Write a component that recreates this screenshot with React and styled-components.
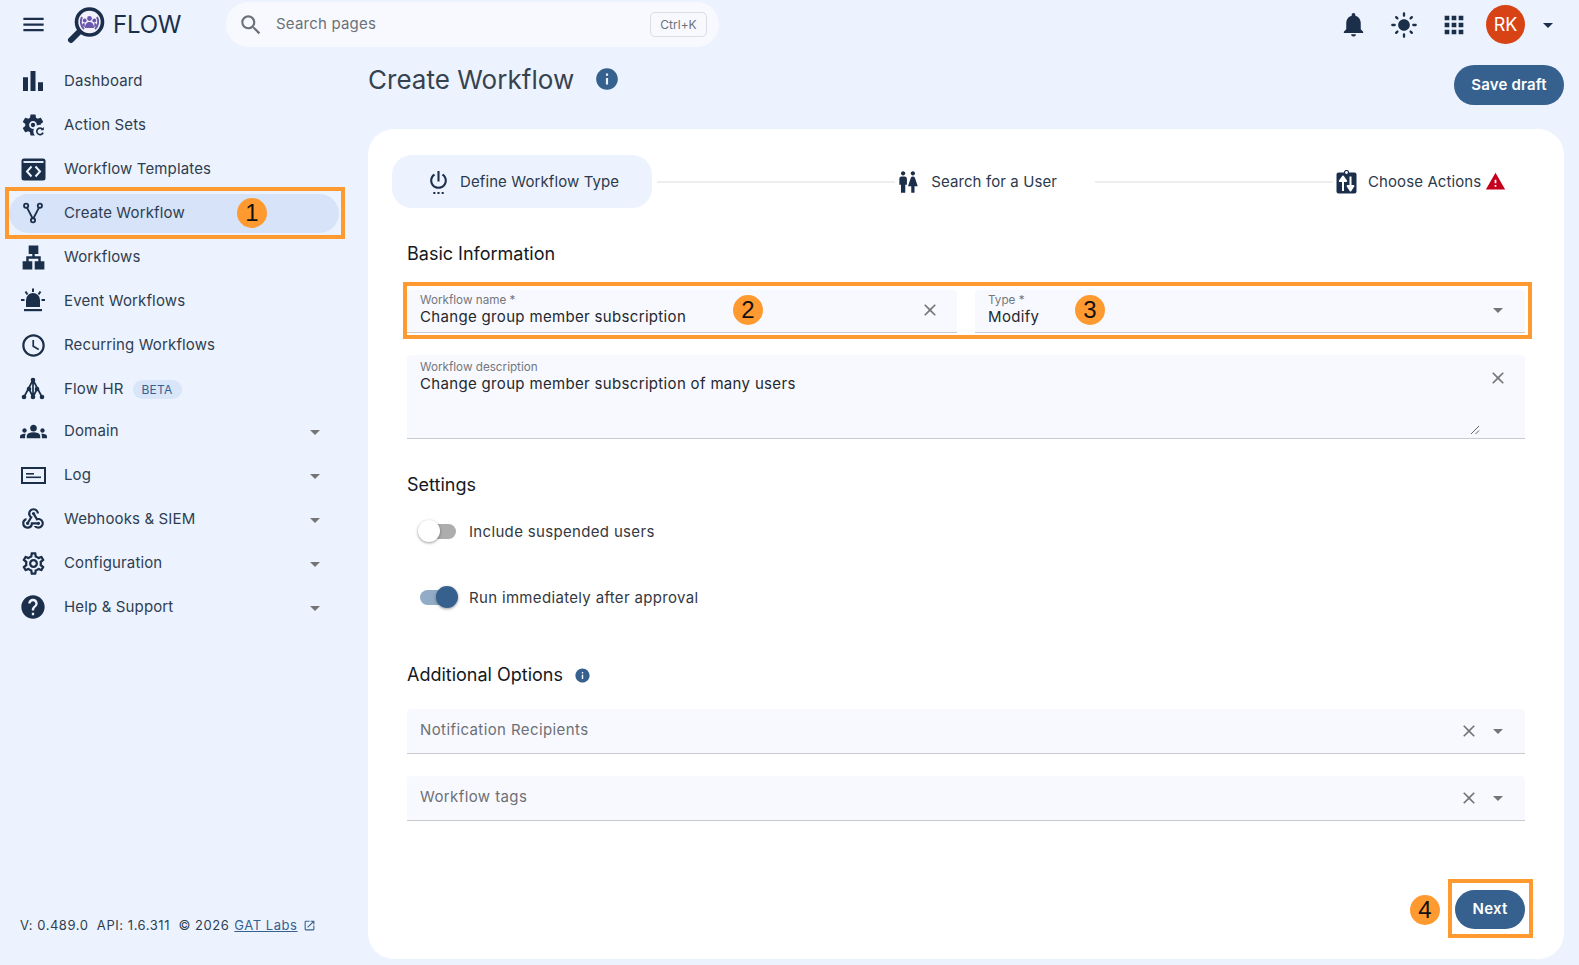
import React from 'react'
import styled, { createGlobalStyle } from 'styled-components'
import {
  MdMenu, MdSearch, MdNotifications, MdLightMode, MdApps, MdBarChart, MdLan, MdAccessTime, MdGroups,
  MdOutlineWebhook, MdOutlineSettings, MdHelp, MdArrowDropDown, MdInfo, MdClose, MdSettingsPower, MdWc,
  MdWarning, MdOpenInNew,
} from 'react-icons/md'

const navy = '#1b2f4b'
const blue = '#36618e'
const orange = '#ff9a30'

const Global = createGlobalStyle`
  html, body { margin: 0; height: 100%; overflow: hidden; }
  body {
    background: #ecf3fe;
    color: #2f3d50;
    font-family: Inter, "Noto Sans", sans-serif;
    font-size: 15px;
    letter-spacing: 0.14px;
  }
  * { box-sizing: border-box; }
`

const Page = styled.div`
  display: flex;
  flex-direction: column;
  height: 965px;
`

const Header = styled.header`
  display: flex;
  align-items: center;
  height: 47px;
  padding: 2px 19px 0 0;
  flex: none;
`

const Brand = styled.div`
  width: 226px;
  flex: none;
  display: flex;
  align-items: center;
  padding-left: 20px;
  color: ${navy};
`

const LogoSlot = styled.span`
  display: flex;
  margin-left: 19px;
`

const LogoText = styled.span`
  font-size: 24px;
  line-height: 30px;
  margin-left: 7px;
  letter-spacing: -0.2px;
`

const Search = styled.div`
  width: 493px;
  height: 45px;
  border-radius: 23px;
  background: #f8f9fe;
  display: flex;
  align-items: center;
  padding: 0 12px;
  color: #6c7178;
  gap: 12px;
`

const SearchText = styled.span`
  flex: 1;
  letter-spacing: 0.2px;
  padding-bottom: 2px;
`

const Kbd = styled.span`
  width: 57px;
  height: 25px;
  border: 1px solid #dcdde0;
  border-radius: 5px;
  font-size: 12px;
  letter-spacing: 0;
  display: flex;
  align-items: center;
  justify-content: center;
`

const TopIcons = styled.div`
  margin-left: auto;
  display: flex;
  align-items: center;
  gap: 22px;
  color: ${navy};
`

const Avatar = styled.div`
  width: 39px;
  height: 39px;
  border-radius: 50%;
  background: #d84315;
  color: #fff;
  font-size: 18px;
  letter-spacing: 0;
  display: flex;
  align-items: center;
  justify-content: center;
  margin-left: -4px;
`

const UserCaret = styled.span`
  display: flex;
  margin-left: -11px;
`

const Body = styled.div`
  flex: 1;
  display: flex;
  min-height: 0;
`

const Sidebar = styled.aside`
  width: 368px;
  flex: none;
  display: flex;
  flex-direction: column;
  padding: 12px 0 30px;
`

const NavGroup = styled.nav`
  margin-top: ${p => p.$shift || 0}px;
`

const NavRow = styled.div`
  position: relative;
  height: 44px;
  display: flex;
  align-items: center;
  padding: 0 0 0 9px;
`

const NavPill = styled.div`
  width: 330px;
  height: 39px;
  border-radius: 20px;
  background: ${p => (p.$active ? '#d6e3f8' : 'transparent')};
  display: flex;
  align-items: center;
  padding: 0 12px;
  gap: 19px;
`

const NavIcon = styled.span`
  width: 24px;
  height: 24px;
  flex: none;
  display: flex;
  align-items: center;
  justify-content: center;
  color: ${navy};
  svg { flex: none; }
`

const NavLabel = styled.span`
  padding-bottom: 2px;
`

const NavCaret = styled.span`
  margin-left: auto;
  display: flex;
  color: #757575;
  margin-top: 1px;
`

const Beta = styled.span`
  width: 49px;
  height: 19px;
  border-radius: 10px;
  margin-left: -10px;
  background: #d9e5f8;
  color: ${blue};
  font-size: 12px;
  letter-spacing: 0.2px;
  display: flex;
  align-items: center;
  justify-content: center;
`

const Frame = styled.div`
  position: absolute;
  left: ${p => p.$l}px;
  top: ${p => p.$t}px;
  right: ${p => p.$r}px;
  bottom: ${p => p.$b}px;
  border: 4px solid ${orange};
  pointer-events: none;
`

const Badge = styled.span`
  width: 30px;
  height: 30px;
  flex: none;
  border-radius: 50%;
  background: ${orange};
  color: #111;
  font-family: "Liberation Sans", Arial, sans-serif;
  font-size: 24px;
  letter-spacing: 0;
  display: flex;
  align-items: center;
  justify-content: center;
`

const FloatBadge = styled(Badge)`
  position: absolute;
  left: ${p => p.$l}px;
  top: ${p => p.$t}px;
`

const Footer = styled.footer`
  margin-top: auto;
  padding-left: 20px;
  height: 20px;
  font-size: 13px;
  line-height: 20px;
  letter-spacing: 0.55px;
  white-space: pre;
  display: flex;
  align-items: center;
`

const Link = styled.a`
  color: ${blue};
  text-decoration: underline;
  margin-left: 5px;
`

const ExtIcon = styled.span`
  display: flex;
  margin-left: 5px;
  color: ${blue};
`

const Main = styled.main`
  flex: 1;
  min-width: 0;
  padding-right: 15px;
  display: flex;
  flex-direction: column;
`

const TitleBar = styled.div`
  height: 82px;
  flex: none;
  display: flex;
  align-items: flex-start;
`

const Title = styled.h1`
  margin: 17px 0 0;
  font-size: 26px;
  line-height: 32px;
  font-weight: 400;
  letter-spacing: 0.03px;
  color: #37424f;
`

const TitleInfo = styled.span`
  display: flex;
  margin: 19px 0 0 20px;
  color: ${blue};
`

const Pill = styled.button`
  border: 0;
  background: ${blue};
  color: #fff;
  font: 600 15px Inter, sans-serif;
  letter-spacing: 0.2px;
  border-radius: 20px;
  padding: 0 0 2px;
`

const SaveDraft = styled(Pill)`
  width: 110px;
  height: 40px;
  margin: 18px 0 0 auto;
`

const Card = styled.section`
  height: 830px;
  flex: none;
  background: #fff;
  border-radius: 26px;
  padding: 26px 39px 0 24px;
`

const Stepper = styled.div`
  display: flex;
  align-items: center;
`

const Step = styled.div`
  display: flex;
  align-items: center;
  gap: ${p => p.$gap || 9}px;
  height: 53px;
  border-radius: 20px;
  background: ${p => (p.$active ? '#ecf3fe' : 'transparent')};
  padding: ${p => p.$pad};
  color: #2c3a4d;
  letter-spacing: 0.1px;
  svg { color: ${navy}; flex: none; }
`

const StepWarn = styled.span`
  display: flex;
  margin-left: -7px;
  svg { color: #c4001d; }
`

const StepLine = styled.div`
  width: 238px;
  height: 2px;
  background: #eceef0;
  flex: none;
  margin-left: ${p => p.$ml || 0}px;
`

const Form = styled.div`
  margin-left: 15px;
`

const Heading = styled.h2`
  margin: ${p => p.$mt}px 0 0;
  font-size: 18px;
  line-height: 24px;
  font-weight: 400;
  letter-spacing: 0;
  color: #14181d;
  display: flex;
  align-items: center;
  gap: 11px;
  svg { color: ${blue}; }
`

const FieldRow = styled.div`
  position: relative;
  display: flex;
  gap: 18px;
  margin-top: 24px;
`

const Field = styled.div`
  position: relative;
  flex: ${p => (p.$fill ? '1' : 'none')};
  width: ${p => (p.$fill ? 'auto' : '550px')};
  height: ${p => p.$h || 43}px;
  margin-top: ${p => p.$mt || 0}px;
  background: #f8f9fe;
  border-bottom: 1px solid #c9cad0;
  border-radius: 4px 4px 0 0;
  padding: ${p => p.$pt || 2}px 13px 0;
  display: ${p => (p.$row ? 'flex' : 'block')};
  align-items: center;
`

const FieldLabel = styled.div`
  font-size: 11.7px;
  line-height: 15px;
  letter-spacing: 0;
  color: #74777c;
  margin: 1px 0 -1px;
`

const FieldValue = styled.div`
  line-height: 20px;
  color: #23282e;
  letter-spacing: 0.33px;
`

const Placeholder = styled.div`
  letter-spacing: 0.4px;
  color: #6c7076;
  margin-top: -5px;
`

const FieldIcons = styled.div`
  position: absolute;
  right: ${p => p.$r}px;
  top: ${p => p.$t}px;
  display: flex;
  align-items: center;
  color: #757575;
  gap: ${p => p.$gap || 0}px;
`

const Resizer = styled.svg`
  position: absolute;
  right: 45px;
  bottom: 3px;
`

const SwitchRow = styled.label`
  height: 40px;
  margin-top: ${p => p.$mt}px;
  display: flex;
  align-items: center;
  gap: 13px;
  padding-left: 13px;
  letter-spacing: 0.33px;
  color: #34393f;
`

const Track = styled.span`
  position: relative;
  width: 36px;
  height: 15px;
  border-radius: 8px;
  background: ${p => (p.$on ? '#92abc7' : '#adadad')};
`

const Thumb = styled.span`
  position: absolute;
  top: -4px;
  left: ${p => (p.$on ? '16px' : '-2px')};
  width: 22px;
  height: 22px;
  border-radius: 50%;
  background: ${p => (p.$on ? blue : '#fff')};
  box-shadow: 0 1px 3px rgba(0, 0, 0, 0.4);
`

const Actions = styled.div`
  position: relative;
  margin-top: 69px;
  display: flex;
  justify-content: flex-end;
  align-items: center;
  gap: 15px;
`

const NextButton = styled(Pill)`
  width: 70px;
  height: 39px;
`

const LogoMark = () => (
  <svg width="40" height="38" viewBox="0 0 40 38">
    <path d="M13 26 L5 34" stroke={navy} strokeWidth="6" strokeLinecap="round" />
    <circle cx="23.5" cy="16" r="13" fill="#f3f2fb" stroke={navy} strokeWidth="3.6" />
    <path d="M16 11a10 10 0 0 0 2 12M31 11a10 10 0 0 1-2 12" fill="none" stroke="#6a58ad" strokeWidth="2" />
    <circle cx="23.5" cy="12.5" r="2.4" fill="#6a58ad" />
    <circle cx="18.7" cy="14.5" r="1.9" fill="#6a58ad" />
    <circle cx="28.3" cy="14.5" r="1.9" fill="#6a58ad" />
    <path d="M19 22c0-4 2-6 4.500-6s4.500 2 4.500 6zM16 20c0-2 1-3 2.500-3l.5 4zM31 20c0-2-1-3-2.500-3l-.5 4z" fill="#6a58ad" />
  </svg>
)

const gearPath = 'M19.14 12.94c.04-.3.06-.61.06-.94 0-.32-.02-.64-.07-.94l2.03-1.58c.18-.14.23-.41.12-.61l-1.92-3.32c-.12-.22-.37-.29-.59-.22l-2.39.96c-.5-.38-1.03-.7-1.62-.94l-.36-2.54c-.04-.24-.24-.41-.48-.41h-3.84c-.24 0-.43.17-.47.41l-.36 2.54c-.59.24-1.13.57-1.62.94l-2.39-.96c-.22-.08-.47 0-.59.22L2.74 8.87c-.12.21-.08.47.12.61l2.03 1.58c-.05.3-.09.63-.09.94s.02.64.07.94l-2.03 1.58c-.18.14-.23.41-.12.61l1.92 3.32c.12.22.37.29.59.22l2.39-.96c.5.38 1.03.7 1.62.94l.36 2.54c.05.24.24.41.48.41h3.84c.24 0 .44-.17.47-.41l.36-2.54c.59-.24 1.13-.56 1.62-.94l2.39.96c.22.08.47 0 .59-.22l1.92-3.32c.12-.22.07-.47-.12-.61l-2.01-1.58zM12 15.6c-1.98 0-3.6-1.62-3.6-3.6s1.62-3.6 3.6-3.6 3.6 1.62 3.6 3.6-1.62 3.6-3.6 3.6z'

const ActionSetsIcon = () => (
  <svg width="26" height="26" viewBox="0 0 24 24">
    <path d={gearPath} fill="currentColor" />
    <circle cx="12" cy="12" r="2" fill="currentColor" />
    <circle cx="18.500" cy="18" r="6.200" fill="#ecf3fe" />
    <path d="M21.300 19a3 3 0 1 1-.4-3" fill="none" stroke="currentColor" strokeWidth="1.500" />
    <path d="M22 13.800v3h-3z" fill="currentColor" />
  </svg>
)

const TemplatesIcon = () => (
  <svg width="25" height="23" viewBox="0 0 25 23">
    <rect x="0.500" y="0.500" width="24" height="22" rx="2.500" fill="currentColor" />
    <rect x="2.500" y="3" width="20" height="2" fill="#dfe8f6" />
    <path d="M10.500 8.500l-4.500 5 4.500 5M14.500 8.500l4.500 5-4.500 5" fill="none" stroke="#ecf3fe" strokeWidth="2" />
  </svg>
)

const ForkIcon = () => (
  <svg width="22" height="22" viewBox="0 0 24 24" fill="none" stroke="currentColor" strokeWidth="2">
    <circle cx="4.500" cy="4" r="2.300" />
    <circle cx="19.500" cy="4" r="2.300" />
    <circle cx="12" cy="20" r="2.300" />
    <path d="M5.500 6.200L11.500 17.700M18.500 6.200L12.500 17.700" />
  </svg>
)

const SirenIcon = () => (
  <svg width="24" height="26" viewBox="0 0 24 26">
    <path d="M5 19v-7a7 7 0 0 1 14 0v7z" fill="currentColor" />
    <rect x="3" y="21" width="18" height="2.200" fill="currentColor" />
    <rect x="11" y="0.500" width="2" height="3.500" fill="currentColor" />
    <rect x="0" y="11" width="3.500" height="2" fill="currentColor" />
    <rect x="20.500" y="11" width="3.500" height="2" fill="currentColor" />
    <path d="M4.500 3.500l2 3M19.500 3.500l-2 3" stroke="currentColor" strokeWidth="2" />
  </svg>
)

const TreeIcon = () => (
  <svg width="24" height="24" viewBox="0 0 24 24">
    <path d="M12 3L3 20M12 3l9 17M12 3v17M8 12l4 8M16 12l-4 8" fill="none" stroke="currentColor" strokeWidth="1.700" />
    {[[12, 3], [8, 12], [16, 12], [3, 20], [12, 20], [21, 20]].map(([cx, cy]) => (
      <circle key={`${cx}-${cy}`} cx={cx} cy={cy} r="2.300" fill="currentColor" />
    ))}
  </svg>
)

const LogIcon = () => (
  <svg width="25" height="17" viewBox="0 0 25 17">
    <rect x="1" y="1" width="23" height="15" fill="none" stroke="currentColor" strokeWidth="2" />
    <rect x="5" y="6" width="8" height="1.600" fill="currentColor" />
    <rect x="5" y="9.500" width="15" height="1.600" fill="currentColor" />
  </svg>
)

const ClipboardIcon = () => (
  <svg width="21" height="24" viewBox="0 0 21 24">
    <rect x="0.500" y="2.500" width="20" height="21" rx="2" fill={navy} />
    <circle cx="10.500" cy="2.500" r="2" fill="#fff" stroke={navy} strokeWidth="1.200" />
    <path d="M7 21V8M3.800 11L7 6.500 10.200 11z" stroke="#fff" strokeWidth="2" fill="#fff" strokeLinejoin="round" />
    <path d="M14.500 6.500V18M11.600 16l2.900 4.500 2.900-4.500z" stroke="#fff" strokeWidth="2" fill="#fff" strokeLinejoin="round" />
  </svg>
)

const navTop = [
  { label: 'Dashboard', icon: <MdBarChart size={30} /> },
  { label: 'Action Sets', icon: <ActionSetsIcon /> },
  { label: 'Workflow Templates', icon: <TemplatesIcon /> },
  { label: 'Create Workflow', icon: <ForkIcon />, active: true },
  { label: 'Workflows', icon: <MdLan size={29} /> },
  { label: 'Event Workflows', icon: <SirenIcon /> },
  { label: 'Recurring Workflows', icon: <MdAccessTime size={27} /> },
  { label: 'Flow HR', icon: <TreeIcon />, beta: true },
]

const navBottom = [
  { label: 'Domain', icon: <MdGroups size={27} /> },
  { label: 'Log', icon: <LogIcon /> },
  { label: 'Webhooks & SIEM', icon: <MdOutlineWebhook size={26} /> },
  { label: 'Configuration', icon: <MdOutlineSettings size={27} /> },
  { label: 'Help & Support', icon: <MdHelp size={28} /> },
]

const NavItem = ({ item, caret }) => (
  <NavRow>
    <NavPill $active={item.active}>
      <NavIcon>{item.icon}</NavIcon>
      <NavLabel>{item.label}</NavLabel>
      {item.beta && <Beta>BETA</Beta>}
      {caret && <NavCaret><MdArrowDropDown size={24} /></NavCaret>}
    </NavPill>
    {item.active && (
      <>
        <Frame $l={5} $t={-4} $r={23} $b={-4} />
        <FloatBadge $l={237} $t={7}>1</FloatBadge>
      </>
    )}
  </NavRow>
)

export default function App() {
  return (
    <Page>
      <Global />
      <Header>
        <Brand>
          <MdMenu size={27} />
          <LogoSlot><LogoMark /></LogoSlot>
          <LogoText>FLOW</LogoText>
        </Brand>
        <Search>
          <MdSearch size={26} />
          <SearchText>Search pages</SearchText>
          <Kbd>Ctrl+K</Kbd>
        </Search>
        <TopIcons>
          <MdNotifications size={29} />
          <MdLightMode size={28} />
          <MdApps size={28} />
          <Avatar>RK</Avatar>
          <UserCaret><MdArrowDropDown size={24} /></UserCaret>
        </TopIcons>
      </Header>
      <Body>
        <Sidebar>
          <NavGroup>
            {navTop.map(item => <NavItem key={item.label} item={item} />)}
          </NavGroup>
          <NavGroup $shift={-2}>
            {navBottom.map(item => <NavItem key={item.label} item={item} caret />)}
          </NavGroup>
          <Footer>
            V: 0.489.0  API: 1.6.311  © 2026<Link>GAT Labs</Link>
            <ExtIcon><MdOpenInNew size={13} /></ExtIcon>
          </Footer>
        </Sidebar>
        <Main>
          <TitleBar>
            <Title>Create Workflow</Title>
            <TitleInfo><MdInfo size={26} /></TitleInfo>
            <SaveDraft>Save draft</SaveDraft>
          </TitleBar>
          <Card>
            <Stepper>
              <Step $active $pad="0 33px 0 34px">
                <MdSettingsPower size={25} />
                <span>Define Workflow Type</span>
              </Step>
              <StepLine $ml={5} />
              <Step $pad="0 38px 0 0" $gap={10}>
                <MdWc size={26} />
                <span>Search for a User</span>
              </Step>
              <StepLine />
              <Step $pad="0 0 0 3px" $gap={11}>
                <ClipboardIcon />
                <span>Choose Actions</span>
                <StepWarn><MdWarning size={21} /></StepWarn>
              </Step>
            </Stepper>
            <Form>
              <Heading $mt={34}>Basic Information</Heading>
              <FieldRow>
                <Field>
                  <FieldLabel>Workflow name *</FieldLabel>
                  <FieldValue>Change group member subscription</FieldValue>
                  <FieldIcons $r={17} $t={10}><MdClose size={20} /></FieldIcons>
                  <FloatBadge $l={326} $t={5}>2</FloatBadge>
                </Field>
                <Field $fill>
                  <FieldLabel>Type *</FieldLabel>
                  <FieldValue>Modify</FieldValue>
                  <FieldIcons $r={15} $t={8}><MdArrowDropDown size={24} /></FieldIcons>
                  <FloatBadge $l={100} $t={5}>3</FloatBadge>
                </Field>
                <Frame $l={-4} $t={-8} $r={-7} $b={-6} />
              </FieldRow>
              <Field $fill $h={84} $mt={22} $pt={4}>
                <FieldLabel>Workflow description</FieldLabel>
                <FieldValue>Change group member subscription of many users</FieldValue>
                <FieldIcons $r={17} $t={13}><MdClose size={20} /></FieldIcons>
                <Resizer width="10" height="10" viewBox="0 0 10 10">
                  <path d="M1 9L9 1M5.500 9L9 5.500" stroke="#666" strokeWidth="1" />
                </Resizer>
              </Field>
              <Heading $mt={34}>Settings</Heading>
              <SwitchRow $mt={14}>
                <Track><Thumb /></Track>
                Include suspended users
              </SwitchRow>
              <SwitchRow $mt={26}>
                <Track $on><Thumb $on /></Track>
                Run immediately after approval
              </SwitchRow>
              <Heading $mt={46}>
                Additional Options
                <MdInfo size={17} />
              </Heading>
              <Field $fill $h={45} $mt={22} $row>
                <Placeholder>Notification Recipients</Placeholder>
                <FieldIcons $r={15} $t={10} $gap={7}>
                  <MdClose size={20} />
                  <MdArrowDropDown size={24} />
                </FieldIcons>
              </Field>
              <Field $fill $h={45} $mt={22} $row>
                <Placeholder>Workflow tags</Placeholder>
                <FieldIcons $r={15} $t={10} $gap={7}>
                  <MdClose size={20} />
                  <MdArrowDropDown size={24} />
                </FieldIcons>
              </Field>
              <Actions>
                <Badge>4</Badge>
                <NextButton>Next</NextButton>
                <Frame $l={1041} $t={-11} $r={-8} $b={-9} />
              </Actions>
            </Form>
          </Card>
        </Main>
      </Body>
    </Page>
  )
}
